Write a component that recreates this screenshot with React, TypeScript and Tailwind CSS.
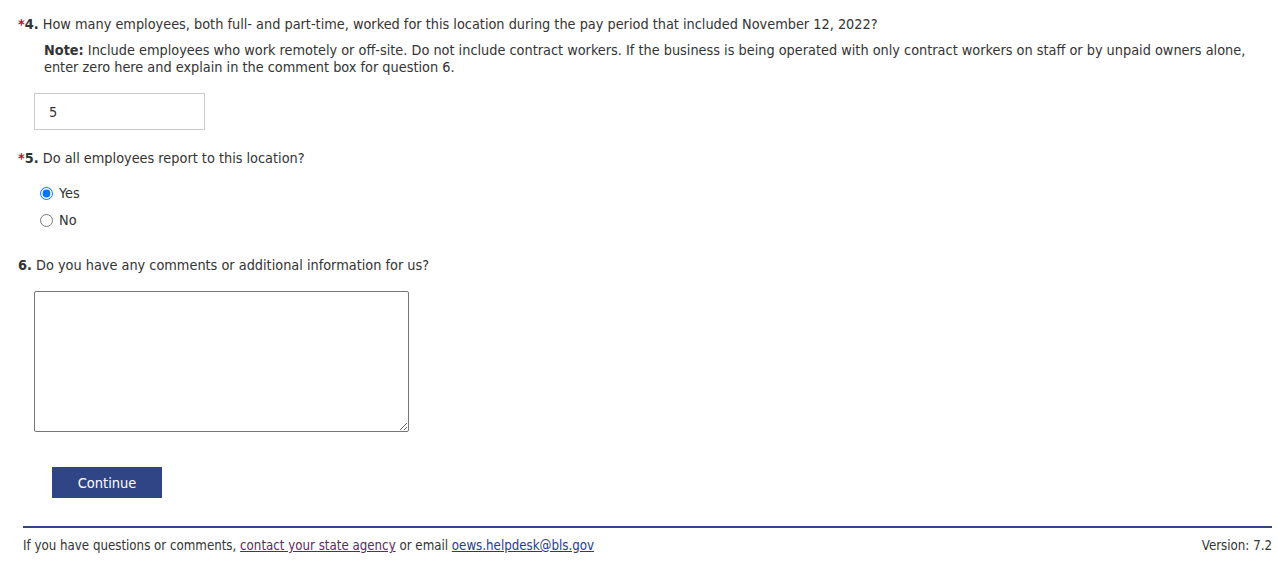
import React from "react";

export default function App() {
  const font = { fontFamily: '"DejaVu Sans Condensed", "DejaVu Sans", Tahoma, sans-serif' };
  return (
    <div className="w-[1278px] h-[565px] bg-white text-[#333333] text-[14.35px] overflow-hidden" style={font}>
      <div className="pl-[18px] pr-[20px]">
        <div className="pt-[15px] leading-[18px]">
          <span className="text-[#a3192f] font-bold">*</span>
          <span className="font-bold">4.</span> How many employees, both full- and part-time, worked for this location during the pay period that included November 12, 2022?
        </div>
        <div className="mt-[9px] ml-[26px] leading-[17px]">
          <span className="font-bold">Note:</span> Include employees who work remotely or off-site. Do not include contract workers. If the business is being operated with only contract workers on staff or by unpaid owners alone, enter zero here and explain in the comment box for question 6.
        </div>
        <div className="mt-[17px] ml-[16px] w-[171px] h-[37px] border border-[#cccccc] flex items-center pl-[14px] leading-[18px]">
          5
        </div>
        <div className="mt-[19px] leading-[18px]">
          <span className="text-[#a3192f] font-bold">*</span>
          <span className="font-bold">5.</span> Do all employees report to this location?
        </div>
        <label className="mt-[17px] ml-[22px] flex items-center h-[18px] leading-[18px]">
          <input type="radio" name="q5" defaultChecked className="w-[13px] h-[13px] m-0 mr-[6px]" />
          Yes
        </label>
        <label className="mt-[9px] ml-[22px] flex items-center h-[18px] leading-[18px]">
          <input type="radio" name="q5" className="w-[13px] h-[13px] m-0 mr-[6px]" />
          No
        </label>
        <div className="mt-[27px] leading-[18px]">
          <span className="font-bold">6.</span> Do you have any comments or additional information for us?
        </div>
        <textarea className="block mt-[17px] ml-[16px] w-[375px] h-[141px] border border-[#767676] rounded-[2px] bg-white" />
        <button className="block mt-[35px] ml-[34px] w-[110px] h-[31px] bg-[#2f4585] text-white text-[14.5px] leading-[18px]" style={font}>
          Continue
        </button>
      </div>
      <div className="mx-[23px] mr-[6px] mt-[28px] border-t-2 border-[#2f4585]" />
      <div className="mx-[23px] mr-[6px] mt-[9px] flex justify-between leading-[18px] text-[13.2px]">
        <div>
          If you have questions or comments, <a className="underline text-[#5b2a5e]" href="#">contact your state agency</a> or email <a className="underline text-[#1d3c8f]" href="#">oews.helpdesk@bls.gov</a>
        </div>
        <div>Version: 7.2</div>
      </div>
    </div>
  );
}
